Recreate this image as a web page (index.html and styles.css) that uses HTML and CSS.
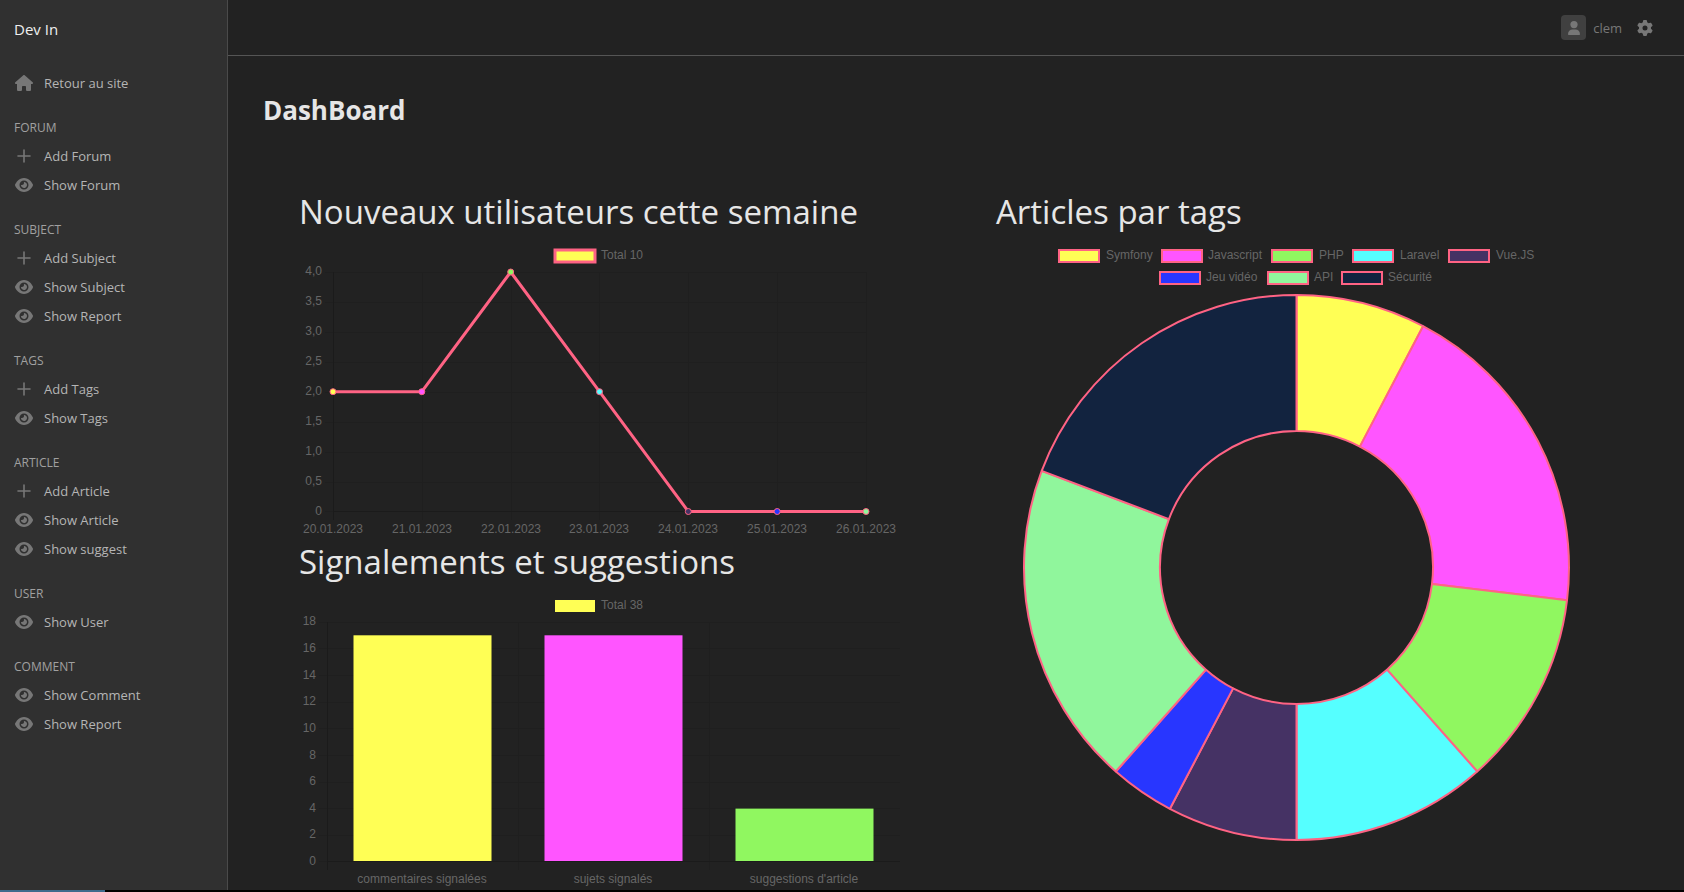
FILE: index.html
```
<!DOCTYPE html>
<html lang="fr">
<head>
<meta charset="utf-8">
<title>Dev In - DashBoard</title>
<link rel="stylesheet" href="styles.css">
</head>
<body>
<svg class="sprite" aria-hidden="true">
  <symbol id="house" viewBox="0 0 576 512"><path d="M575.8 255.5c0 18-15 32.1-32 32.1h-32l.7 160.2c0 2.7-.2 5.4-.5 8.1V472c0 22.1-17.9 40-40 40H392c-22.1 0-40-17.9-40-40V384c0-17.7-14.3-32-32-32H256c-17.7 0-32 14.3-32 32v88c0 22.1-17.9 40-40 40H104c-22.1 0-40-17.9-40-40V287.6H32c-18 0-32-14-32-32.1c0-9 3-17 10-24L266.4 8c7-7 15-8 22-8s15 2 21 7L564.8 231.5c8 7 12 15 11 24z"/></symbol>
  <symbol id="plus" viewBox="0 0 18 16"><path d="M9 2v12M3 8h12" fill="none" stroke="currentColor" stroke-width="1.6" stroke-linecap="round"/></symbol>
  <symbol id="eye" viewBox="0 0 576 512"><path d="M288 32c-80.8 0-145.5 36.8-192.6 80.6C48.6 156 17.3 208 2.5 243.7c-3.3 7.9-3.3 16.7 0 24.6C17.3 304 48.6 356 95.4 399.4C142.5 443.2 207.2 480 288 480s145.5-36.8 192.6-80.6c46.8-43.5 78.1-95.4 93-131.1c3.3-7.9 3.3-16.7 0-24.6c-14.9-35.7-46.2-87.7-93-131.1C433.5 68.8 368.8 32 288 32zM144 256a144 144 0 1 1 288 0 144 144 0 1 1 -288 0zm144-64c0 35.3-28.7 64-64 64c-7.1 0-13.9-1.2-20.3-3.3c-5.5-1.8-11.9 1.6-11.7 7.4c.3 6.9 1.3 13.8 3.2 20.7c13.7 51.2 66.4 81.6 117.6 67.9s81.6-66.4 67.9-117.6c-11.1-41.5-47.8-69.4-88.6-71.1c-5.8-.2-9.2 6.1-7.4 11.7c2.1 6.4 3.3 13.2 3.3 20.3z"/></symbol>
  <symbol id="gear" viewBox="0 0 512 512"><path d="M495.9 166.6c3.2 8.7 .5 18.4-6.4 24.6l-43.3 39.4c1.1 8.3 1.7 16.8 1.7 25.4s-.6 17.1-1.7 25.4l43.3 39.4c6.9 6.2 9.6 15.9 6.4 24.6c-4.4 11.9-9.7 23.3-15.8 34.3l-4.7 8.1c-6.6 11-14 21.4-22.1 31.2c-5.9 7.2-15.7 9.6-24.5 6.8l-55.7-17.7c-13.4 10.3-28.2 18.9-44 25.4l-12.5 57.1c-2 9.1-9 16.3-18.2 17.8c-13.8 2.3-28 3.5-42.5 3.5s-28.7-1.2-42.5-3.5c-9.2-1.5-16.2-8.7-18.2-17.8l-12.5-57.1c-15.8-6.5-30.6-15.1-44-25.4L83.1 425.9c-8.8 2.8-18.6 .3-24.5-6.8c-8.1-9.8-15.5-20.2-22.1-31.2l-4.7-8.1c-6.1-11-11.4-22.4-15.8-34.3c-3.2-8.7-.5-18.4 6.4-24.6l43.3-39.4C64.6 273.1 64 264.6 64 256s.6-17.1 1.7-25.4L22.4 191.2c-6.9-6.2-9.6-15.9-6.4-24.6c4.4-11.9 9.7-23.3 15.8-34.3l4.7-8.1c6.6-11 14-21.4 22.1-31.2c5.9-7.2 15.7-9.6 24.5-6.8l55.7 17.7c13.4-10.3 28.2-18.9 44-25.4l12.5-57.1c2-9.1 9-16.3 18.2-17.8C227.3 1.2 241.5 0 256 0s28.7 1.2 42.5 3.5c9.2 1.5 16.2 8.7 18.2 17.8l12.5 57.1c15.8 6.5 30.6 15.1 44 25.4l55.7-17.7c8.8-2.8 18.6-.3 24.5 6.8c8.1 9.8 15.5 20.2 22.1 31.2l4.7 8.1c6.1 11 11.4 22.4 15.8 34.3zM256 336a80 80 0 1 0 0-160 80 80 0 1 0 0 160z"/></symbol>
  <symbol id="user" viewBox="0 0 12 14"><circle cx="6" cy="3.6" r="3.6"/><path d="M0 13.2C0 10.4 2 8.6 4.6 8.6h2.8c2.600 0 4.600 1.800 4.600 4.600 0 .5-.3.8-.8.8H.8c-.5 0-.8-.3-.8-.8z"/></symbol>
</svg>
<div class="layout">
  <aside class="sidebar">
    <a class="brand" href="#">Dev In</a>
    <nav class="nav">
      <a class="nav-link" href="#"><svg class="icon"><use href="#house"/></svg>Retour au site</a>
      <h2 class="nav-title">FORUM</h2>
      <a class="nav-link" href="#"><svg class="icon"><use href="#plus"/></svg>Add Forum</a>
      <a class="nav-link" href="#"><svg class="icon"><use href="#eye"/></svg>Show Forum</a>
      <h2 class="nav-title">SUBJECT</h2>
      <a class="nav-link" href="#"><svg class="icon"><use href="#plus"/></svg>Add Subject</a>
      <a class="nav-link" href="#"><svg class="icon"><use href="#eye"/></svg>Show Subject</a>
      <a class="nav-link" href="#"><svg class="icon"><use href="#eye"/></svg>Show Report</a>
      <h2 class="nav-title">TAGS</h2>
      <a class="nav-link" href="#"><svg class="icon"><use href="#plus"/></svg>Add Tags</a>
      <a class="nav-link" href="#"><svg class="icon"><use href="#eye"/></svg>Show Tags</a>
      <h2 class="nav-title">ARTICLE</h2>
      <a class="nav-link" href="#"><svg class="icon"><use href="#plus"/></svg>Add Article</a>
      <a class="nav-link" href="#"><svg class="icon"><use href="#eye"/></svg>Show Article</a>
      <a class="nav-link" href="#"><svg class="icon"><use href="#eye"/></svg>Show suggest</a>
      <h2 class="nav-title">USER</h2>
      <a class="nav-link" href="#"><svg class="icon"><use href="#eye"/></svg>Show User</a>
      <h2 class="nav-title">COMMENT</h2>
      <a class="nav-link" href="#"><svg class="icon"><use href="#eye"/></svg>Show Comment</a>
      <a class="nav-link" href="#"><svg class="icon"><use href="#eye"/></svg>Show Report</a>
    </nav>
  </aside>
  <div class="page">
    <header class="topbar">
      <a class="account" href="#"><span class="avatar"><svg class="avatar-icon"><use href="#user"/></svg></span>clem</a>
      <button class="settings" type="button" aria-label="Settings"><svg class="gear-icon"><use href="#gear"/></svg></button>
    </header>
    <main class="main">
      <h1 class="title">DashBoard</h1>
      <div class="charts">
        <div class="column">
          <section>
            <h2 class="chart-title">Nouveaux utilisateurs cette semaine</h2>
            <svg class="chart" viewBox="0 0 601 300" role="img" aria-label="Nouveaux utilisateurs cette semaine">
              <path class="grid" d="M26 32.500H567M26 62.500H567M26 92.500H567M26 122.500H567M26 152.500H567M26 182.500H567M26 212.500H567M26 242.500H567M26 271.500H567M123.500 32V280M212.500 32V280M300.500 32V280M389.500 32V280M478.500 32V280M567.500 32V280"/>
              <path class="axis" d="M34.500 32V280M34 271.500H567"/>
              <rect class="legend-line" x="256" y="10" width="40" height="12"/>
              <text x="302" y="19">Total 10</text>
              <g class="ticks">
                <text x="23" y="35">4,0</text><text x="23" y="65">3,5</text><text x="23" y="95">3,0</text><text x="23" y="125">2,5</text><text x="23" y="155">2,0</text><text x="23" y="185">1,5</text><text x="23" y="215">1,0</text><text x="23" y="245">0,5</text><text x="23" y="275">0</text>
              </g>
              <g class="labels">
                <text x="34" y="293">20.01.2023</text><text x="123" y="293">21.01.2023</text><text x="212" y="293">22.01.2023</text><text x="300" y="293">23.01.2023</text><text x="389" y="293">24.01.2023</text><text x="478" y="293">25.01.2023</text><text x="567" y="293">26.01.2023</text>
              </g>
              <polyline class="line" points="34,151.7 122.800,151.700 211.700,32 300.500,151.700 389.300,271.500 478.200,271.500 567,271.500"/>
              <g class="points">
                <circle class="yellow" cx="34" cy="151.700" r="3"/><circle class="magenta" cx="122.800" cy="151.700" r="3"/><circle class="green" cx="211.700" cy="32" r="3"/><circle class="cyan" cx="300.500" cy="151.700" r="3"/><circle class="purple" cx="389.300" cy="271.500" r="3"/><circle class="blue" cx="478.200" cy="271.500" r="3"/><circle class="mint" cx="567" cy="271.500" r="3"/>
              </g>
            </svg>
          </section>
          <section>
            <h2 class="chart-title">Signalements et suggestions</h2>
            <svg class="chart" viewBox="0 0 601 300" role="img" aria-label="Signalements et suggestions">
              <path class="grid" d="M20 32.500H601M20 58.500H601M20 85.500H601M20 112.500H601M20 138.500H601M20 165.500H601M20 192.500H601M20 218.500H601M20 245.500H601M20 271.500H601M219.500 32V280M410.500 32V280"/>
              <path class="axis" d="M28.500 32V280M28 271.500H601"/>
              <rect class="yellow" x="256" y="10" width="40" height="12"/>
              <text x="302" y="19">Total 38</text>
              <g class="ticks">
                <text x="17" y="35">18</text><text x="17" y="62">16</text><text x="17" y="89">14</text><text x="17" y="115">12</text><text x="17" y="142">10</text><text x="17" y="169">8</text><text x="17" y="195">6</text><text x="17" y="222">4</text><text x="17" y="248">2</text><text x="17" y="275">0</text>
              </g>
              <rect class="yellow" x="54.500" y="45.300" width="138" height="225.700"/>
              <rect class="magenta" x="245.500" y="45.300" width="138" height="225.700"/>
              <rect class="green" x="436.500" y="218.600" width="138" height="52.400"/>
              <g class="labels">
                <text x="123" y="293">commentaires signalées</text><text x="314" y="293">sujets signalés</text><text x="505" y="293">suggestions d'article</text>
              </g>
            </svg>
          </section>
        </div>
        <section class="column">
          <h2 class="chart-title">Articles par tags</h2>
          <svg class="chart" viewBox="0 0 601 601" role="img" aria-label="Articles par tags">
            <g class="swatches">
              <rect class="yellow" x="63" y="10" width="40" height="12"/><rect class="magenta" x="166" y="10" width="40" height="12"/><rect class="green" x="276" y="10" width="40" height="12"/><rect class="cyan" x="357" y="10" width="40" height="12"/><rect class="purple" x="453" y="10" width="40" height="12"/>
              <rect class="blue" x="164" y="32" width="40" height="12"/><rect class="mint" x="272" y="32" width="40" height="12"/><rect class="navy" x="346" y="32" width="40" height="12"/>
            </g>
            <text x="110" y="19">Symfony</text><text x="212" y="19">Javascript</text><text x="323" y="19">PHP</text><text x="404" y="19">Laravel</text><text x="500" y="19">Vue.JS</text>
            <text x="210" y="41">Jeu vidéo</text><text x="318" y="41">API</text><text x="392" y="41">Sécurité</text>
            <g class="slices">
              <path class="yellow" d="M300.500 55A272.500 272.500 0 0 1 427.100 86.200L363.900 206.600A136.500 136.500 0 0 0 300.500 191Z"/>
              <path class="magenta" d="M427.100 86.200A272.500 272.500 0 0 1 571 360.300L436 344A136.500 136.500 0 0 0 363.900 206.600Z"/>
              <path class="green" d="M571 360.300A272.500 272.500 0 0 1 481.200 531.500L391 429.700A136.500 136.500 0 0 0 436 344Z"/>
              <path class="cyan" d="M481.200 531.500A272.500 272.500 0 0 1 300.500 600V464A136.500 136.500 0 0 0 391 429.700Z"/>
              <path class="purple" d="M300.500 600A272.500 272.500 0 0 1 173.900 568.800L237.100 448.400A136.500 136.500 0 0 0 300.500 464Z"/>
              <path class="blue" d="M173.900 568.800A272.500 272.500 0 0 1 119.800 531.500L210 429.700A136.500 136.500 0 0 0 237.100 448.400Z"/>
              <path class="mint" d="M119.800 531.500A272.500 272.500 0 0 1 45.700 230.900L172.900 279.100A136.500 136.500 0 0 0 210 429.700Z"/>
              <path class="navy" d="M45.700 230.900A272.500 272.500 0 0 1 300.500 55V191A136.500 136.500 0 0 0 172.900 279.100Z"/>
            </g>
          </svg>
        </section>
      </div>
    </main>
  </div>
</div>
<div class="progress"><div class="progress-bar"></div></div>
</body>
</html>
```
FILE: styles.css
```
* { box-sizing: border-box; }

body {
  margin: 0;
  height: 100vh;
  display: flex;
  flex-direction: column;
  overflow: hidden;
  background: #222;
  color: #b5b5b5;
  font: 14px/20px "Open Sans", "Noto Sans", sans-serif;
}

a { color: inherit; text-decoration: none; }
h1, h2 { margin: 0; }
.sprite { display: none; }

.layout { flex: 1; min-height: 0; display: flex; overflow: hidden; }

/* Sidebar */
.sidebar {
  flex: 0 0 228px;
  padding: 19px 14px;
  background: #303030;
  border-right: 1px solid #4a4a4a;
}
.brand { display: block; color: #eee; font-size: 15px; }
.nav { display: flex; flex-direction: column; padding-top: 29px; }
.nav-link { display: flex; align-items: center; gap: 11px; height: 29px; padding-left: 1px; font-size: 13px; }
.nav-title { height: 27px; margin-top: 17px; font-size: 12px; font-weight: 400; line-height: 28px; color: #a0a0a0; }
.icon { width: 18px; height: 16px; fill: currentColor; color: #777; }

/* Top bar */
.page { flex: 1; min-width: 0; }
.topbar {
  display: flex;
  align-items: center;
  justify-content: flex-end;
  gap: 15px;
  height: 56px;
  padding-right: 31px;
  border-bottom: 1px solid #555;
}
.account { display: flex; align-items: center; gap: 7px; color: #777; font-size: 13px; }
.avatar { display: grid; place-items: center; width: 25px; height: 25px; border-radius: 4px; background: #404040; }
.avatar-icon { width: 12px; height: 14px; fill: #777; }
.settings { display: grid; padding: 0; border: 0; background: none; color: #777; }
.gear-icon { width: 16px; height: 16px; fill: currentColor; }

/* Dashboard */
.title { padding: 34px 35px 0; color: #e6e6e6; font-size: 26px; line-height: 40px; }
.charts { display: grid; grid-template-columns: 1fr 1fr; gap: 96px; padding: 60px 87px 0 71px; }
.column { min-width: 0; }
.chart-title { padding-bottom: 6px; color: #e6e6e6; font-size: 33px; font-weight: 400; line-height: 44px; }
.chart { display: block; width: 100%; height: auto; }
.chart text { fill: #666; font: 12px "Liberation Sans", Arial, sans-serif; }
.ticks text { text-anchor: end; }
.labels text { text-anchor: middle; }
.grid { stroke: #1f1f1f; fill: none; }
.axis { stroke: #1b1b1b; fill: none; }
.line { fill: none; stroke: #ff6384; stroke-width: 3; stroke-linejoin: round; }
.points, .slices { stroke: #ff6384; stroke-linejoin: bevel; }
.slices, .swatches { stroke: #ff6384; stroke-width: 2; }
.legend-line { fill: #ffff55; stroke: #ff6384; stroke-width: 3; }
.yellow { fill: #ffff55; }
.magenta { fill: #ff55ff; }
.green { fill: #90f760; }
.cyan { fill: #55ffff; }
.purple { fill: #453264; }
.blue { fill: #2836ff; }
.mint { fill: #90f69c; }
.navy { fill: #12233f; }

/* Loading strip */
.progress { flex: 0 0 2px; background: #000; }
.progress-bar { width: 105px; height: 2px; background: #3f6b8c; }
```
